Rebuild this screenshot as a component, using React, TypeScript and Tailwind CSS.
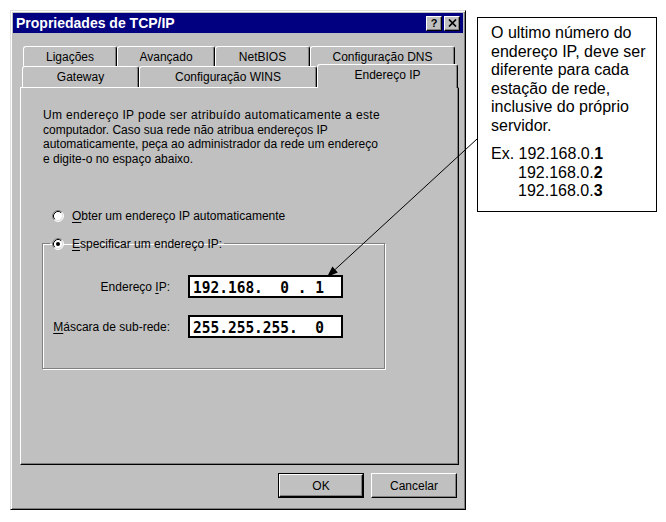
import React from 'react';

function Radio({ checked }: { checked?: boolean }) {
    return (
        <svg width="12" height="12" viewBox="0 0 12 12" className="shrink-0">
            <circle cx="6" cy="6" r="5" fill="#ffffff" />
            <path d="M2.11 9.89 A5.5 5.5 0 0 1 9.89 2.11" stroke="#808080" strokeWidth="1" fill="none" />
            <path d="M9.89 2.11 A5.5 5.5 0 0 1 2.11 9.89" stroke="#ffffff" strokeWidth="1" fill="none" />
            <path d="M2.82 9.18 A4.5 4.5 0 0 1 9.18 2.82" stroke="#000000" strokeWidth="1" fill="none" />
            <path d="M9.18 2.82 A4.5 4.5 0 0 1 2.82 9.18" stroke="#dfdfdf" strokeWidth="1" fill="none" />
            {checked && <circle cx="6" cy="6" r="2" fill="#000000" />}
        </svg>
    );
}

function Tab({ label, w, selected }: { label: string; w: string; selected?: boolean }) {
    if (selected) {
        return (
            <div className={`${w} h-[24px] -mb-[1px] relative z-10 bg-[#c0c0c0] border-t border-l border-white border-r border-r-black shadow-[inset_-1px_0_0_#808080] rounded-t-[3px] flex items-center justify-center pb-[3px]`}>
                {label}
            </div>
        );
    }
    return (
        <div className={`${w} h-full border-t border-l border-white border-r border-r-black shadow-[inset_-1px_0_0_#808080] rounded-t-[3px] flex items-center justify-center`}>
            {label}
        </div>
    );
}

function IpField({ value }: { value: string }) {
    return (
        <div className="w-[155px] h-[23px] bg-white border-2 border-black flex items-center pl-[3px]">
            <span className="inline-block scale-y-[1.12] whitespace-pre font-['DejaVu_Sans_Mono',monospace] font-bold text-[14.5px] leading-none">{value}</span>
        </div>
    );
}

function Button({ label, primary }: { label: string; primary?: boolean }) {
    return (
        <div
            className={
                primary
                    ? 'w-[86px] h-[25px] border border-black flex'
                    : 'w-[86px] h-[25px] flex'
            }
        >
            <div className="flex-1 flex items-center justify-center border-t border-l border-white border-r border-b border-r-black border-b-black shadow-[inset_-1px_-1px_0_#808080]">
                {label}
            </div>
        </div>
    );
}

function Dialog() {
    return (
        <div className="w-[456px] h-[500px] shrink-0 bg-[#c0c0c0] border-t border-l border-[#dfdfdf] border-r border-b border-r-black border-b-black shadow-[inset_1px_1px_0_#fff,inset_-1px_-1px_0_#808080] p-[2px] flex flex-col text-[12px] text-black">
            <div className="h-[20px] bg-[#000080] flex items-center justify-between pl-[3px] pr-[3px]">
                <span className="text-white font-bold text-[14px] leading-none">Propriedades de TCP/IP</span>
                <div className="flex gap-[2px]">
                    <div className="w-[16px] h-[15px] bg-[#c0c0c0] border-t border-l border-white border-r border-b border-r-black border-b-black shadow-[inset_-1px_-1px_0_#808080] flex items-center justify-center font-bold text-[11px] leading-none">?</div>
                    <div className="w-[16px] h-[15px] bg-[#c0c0c0] border-t border-l border-white border-r border-b border-r-black border-b-black shadow-[inset_-1px_-1px_0_#808080] flex items-center justify-center">
                        <svg width="9" height="8" viewBox="0 0 9 8">
                            <path d="M1 0.5 L8 7.5 M8 0.5 L1 7.5" stroke="#000" strokeWidth="1.7" />
                        </svg>
                    </div>
                </div>
            </div>

            <div className="mt-[13px] h-[20px] flex ml-[10px]">
                <Tab label="Ligações" w="w-[94px]" />
                <Tab label="Avançado" w="w-[98px]" />
                <Tab label="NetBIOS" w="w-[95px]" />
                <Tab label="Configuração DNS" w="w-[145px]" />
            </div>
            <div className="h-[21px] flex items-end ml-[9px]">
                <Tab label="Gateway" w="w-[117px]" />
                <Tab label="Configuração WINS" w="w-[178px]" />
                <Tab label="Endereço IP" w="w-[141px]" selected />
            </div>

            <div className="h-[378px] ml-[7px] mr-[4px] border-t border-l border-white border-r border-b border-r-black border-b-black shadow-[inset_-1px_-1px_0_#808080] pl-[22px] pt-[20px] flex flex-col">
                <p className="leading-[14.6px]">
                    <span className="tracking-[0.34px]">Um endereço IP pode ser atribuído automaticamente a este</span><br />
                    computador. Caso sua rede não atribua endereços IP<br />
                    automaticamente, peça ao administrador da rede um endereço<br />
                    e digite-o no espaço abaixo.
                </p>

                <div className="mt-[42px] h-[15px] flex items-center gap-[8px] ml-[9px]">
                    <Radio />
                    <span><u className="underline-offset-2">O</u>bter um endereço IP automaticamente</span>
                </div>

                <fieldset className="mt-[13px] -ml-[1px] w-[343px] h-[133px] border border-[#808080] shadow-[inset_1px_1px_0_#fff,1px_1px_0_#fff]">
                    <legend className="ml-[7px] px-[2px] h-[15px] flex items-center gap-[8px]">
                        <Radio checked />
                        <span><u className="underline-offset-2">E</u>specificar um endereço IP:</span>
                    </legend>
                    <div className="flex flex-col gap-[17px] pt-[24px]">
                        <div className="flex items-center gap-[18px] pl-[9px]">
                            <span className="w-[118px] text-right">Endereço <u className="underline-offset-2">I</u>P:</span>
                            <IpField value="192.168.  0 . 1" />
                        </div>
                        <div className="flex items-center gap-[18px] pl-[9px]">
                            <span className="w-[118px] text-right"><u className="underline-offset-2">M</u>áscara de sub-rede:</span>
                            <IpField value="255.255.255.  0" />
                        </div>
                    </div>
                </fieldset>
            </div>

            <div className="mt-[8px] flex justify-end gap-[7px] mr-[6px]">
                <Button label="OK" primary />
                <Button label="Cancelar" />
            </div>
        </div>
    );
}

function Callout() {
    return (
        <div className="ml-[11px] mt-[7px] w-[180px] h-[195px] border border-black bg-white pl-[13px] pt-[6px] text-[16px] leading-[18.5px] text-black">
            <p>
                O ultimo número do<br />
                endereço IP, deve ser<br />
                diferente para cada<br />
                estação de rede,<br />
                inclusive do próprio<br />
                servidor.
            </p>
            <p className="mt-[10px]">Ex. 192.168.0.<b>1</b></p>
            <p className="pl-[27px]">192.168.0.<b>2</b></p>
            <p className="pl-[27px]">192.168.0.<b>3</b></p>
        </div>
    );
}

export default function App() {
    return (
        <div className="relative w-[666px] h-[522px] bg-white overflow-hidden font-['Liberation_Sans',Arial,sans-serif]">
            <div className="flex items-start pt-[10px] pl-[10px]">
                <Dialog />
                <Callout />
            </div>
            {/* seta do balão até o campo de IP */}
            <svg className="absolute inset-0 pointer-events-none" width="666" height="522">
                <line x1="477" y1="139" x2="335.1" y2="269.5" stroke="#000" strokeWidth="1" />
                <polygon points="327,277 337.8,272.5 332.4,266.6" fill="#000" />
            </svg>
        </div>
    );
}
